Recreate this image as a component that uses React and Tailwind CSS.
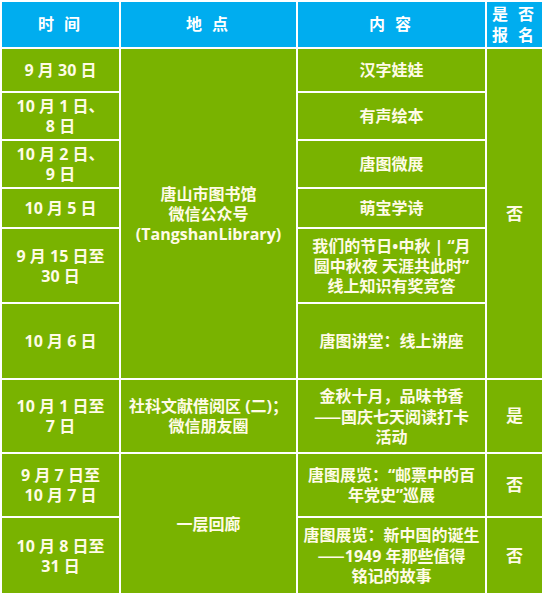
const font = { fontFamily: '"Open Sans", "Noto Sans CJK SC", sans-serif' }

const headers = [
  { label: '时 间', w: 'w-[117px]' },
  { label: '地 点', w: 'w-[175px]' },
  { label: '内 容', w: 'w-[187px]' },
  { label: <>是 否<br />报 名</>, w: 'w-[55px]' },
]

// CJK em dashes join into one line, the Latin ones do not
const Dash = () => <span style={{ fontFamily: '"Noto Sans CJK SC", sans-serif' }}>——</span>

function Cell({ children, className = '', ...rest }) {
  return (
    <td
      {...rest}
      className={`bg-[#79b300] text-[#fffbe6] text-center align-middle font-bold text-[16px] leading-[20px] whitespace-nowrap p-0 ${className}`}
    >
      {children}
    </td>
  )
}

export default function App() {
  return (
    <div className="w-[544px] h-[594px] bg-white" style={font}>
      <table className="bg-white border-separate border-spacing-[2px] table-fixed w-[544px]">
        <thead>
          <tr>
            {headers.map((h, i) => (
              <th
                key={i}
                className={`${h.w} h-[45px] bg-[#00adef] text-white text-[16px] leading-[21px] font-bold tracking-[3px] text-center align-middle p-0`}
              >
                {h.label}
              </th>
            ))}
          </tr>
        </thead>
        <tbody>
          <tr>
            <Cell className="h-[42px]">9 月 30 日</Cell>
            <Cell rowSpan={6}>
              唐山市图书馆<br />微信公众号<br />(TangshanLibrary)
            </Cell>
            <Cell>汉字娃娃</Cell>
            <Cell rowSpan={6} className="text-[17px]">否</Cell>
          </tr>
          <tr>
            <Cell className="h-[46px]">10 月 1 日、<br />8 日</Cell>
            <Cell>有声绘本</Cell>
          </tr>
          <tr>
            <Cell className="h-[46px]">10 月 2 日、<br />9 日</Cell>
            <Cell>唐图微展</Cell>
          </tr>
          <tr>
            <Cell className="h-[38px]">10 月 5 日</Cell>
            <Cell>萌宝学诗</Cell>
          </tr>
          <tr>
            <Cell className="h-[73px]">9 月 15 日至<br />30 日</Cell>
            <Cell>
              我们的节日•中秋 | “月<br />圆中秋夜 天涯共此时”<br />线上知识有奖竞答
            </Cell>
          </tr>
          <tr>
            <Cell className="h-[74px]">10 月 6 日</Cell>
            <Cell>唐图讲堂：线上讲座</Cell>
          </tr>
          <tr>
            <Cell className="h-[72px]">10 月 1 日至<br />7 日</Cell>
            <Cell>社科文献借阅区 (二)；<br />微信朋友圈</Cell>
            <Cell>金秋十月，品味书香<br /><Dash />国庆七天阅读打卡<br />活动</Cell>
            <Cell className="text-[17px]">是</Cell>
          </tr>
          <tr>
            <Cell className="h-[62px]">9 月 7 日至<br />10 月 7 日</Cell>
            <Cell rowSpan={2}>一层回廊</Cell>
            <Cell>唐图展览：“邮票中的百<br />年党史”巡展</Cell>
            <Cell className="text-[17px]">否</Cell>
          </tr>
          <tr>
            <Cell className="h-[75px]">10 月 8 日至<br />31 日</Cell>
            <Cell>唐图展览：新中国的诞生<br /><Dash />1949 年那些值得<br />铭记的故事</Cell>
            <Cell className="text-[17px]">否</Cell>
          </tr>
        </tbody>
      </table>
    </div>
  )
}
